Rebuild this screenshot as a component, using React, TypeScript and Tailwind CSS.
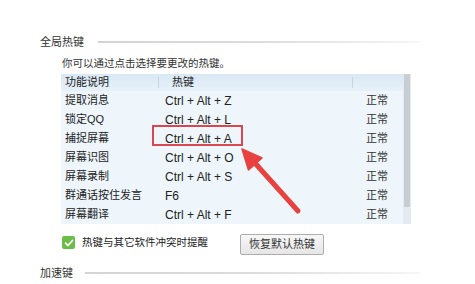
import React from 'react';

const rows = [
  { name: '提取消息', key: 'Ctrl + Alt + Z' },
  { name: '锁定QQ', key: 'Ctrl + Alt + L' },
  { name: '捕捉屏幕', key: 'Ctrl + Alt + A' },
  { name: '屏幕识图', key: 'Ctrl + Alt + O' },
  { name: '屏幕录制', key: 'Ctrl + Alt + S' },
  { name: '群通话按住发言', key: 'F6' },
  { name: '屏幕翻译', key: 'Ctrl + Alt + F' },
];

const font = { fontFamily: '"Liberation Sans", "Noto Sans CJK SC", sans-serif' };

export default function App() {
  return (
    <div className="relative w-[475px] h-[284px] bg-white overflow-hidden text-[#222]" style={font}>
      {/* 全局热键 */}
      <div className="flex items-center pt-[34px] pl-[40px] pr-[55px] h-[50px]">
        <span className="text-[11px] leading-[16px] text-[#333]">全局热键</span>
        <div className="flex-1 ml-[14px] h-[2px] bg-gradient-to-r from-[#d4d4d4] via-[#dcdcdc] to-[#f6f6f6]" />
      </div>

      <div className="pl-[62px] mt-[5px] text-[10.5px] leading-[16px] text-[#333]">你可以通过点击选择要更改的热键。</div>

      {/* 热键列表 */}
      <div className="relative ml-[61px] mt-[3px] w-[350px] h-[150px] flex bg-[#eef6fb]">
        <div className="w-[342px] flex flex-col">
          <div className="flex items-center h-[17px] bg-gradient-to-b from-[#d9e8f4] to-[#e7f1f9] text-[11px]">
            <span className="w-[97px] pl-[4px]">功能说明</span>
            <span className="w-px h-[11px] bg-[#c9d3dc]" />
            <span className="w-[193px] pl-[13px]">热键</span>
            <span className="w-px h-[11px] bg-[#c9d3dc]" />
          </div>
          {rows.map((r) => (
            <div key={r.name} className="flex items-center h-[19px]">
              <span className="w-[104px] pl-[4px] text-[11px]">{r.name}</span>
              <span className="w-[201px] text-[12px]">{r.key}</span>
              <span className="text-[11px] text-[#333]">正常</span>
            </div>
          ))}
        </div>
        {/* 滚动条 */}
        <div className="w-[8px] h-full bg-[#e4ebf0] flex flex-col items-center">
          <div className="w-[6px] h-[133px] bg-[#c6cdd3] rounded-[1px]" />
        </div>

        {/* 红框标注 */}
        <div className="absolute left-[91px] top-[51px] w-[91px] h-[21px] border-2 border-[#d8474f]" />
      </div>

      {/* 选项与按钮 */}
      <div className="flex items-center mt-[10px] h-[21px]">
        <div className="ml-[62px] w-[13px] h-[13px] bg-[#6cbd47] rounded-[2px] flex items-center justify-center -mt-[4px]">
          <svg width="10" height="10" viewBox="0 0 10 10">
            <path d="M1.6 5.2 L4 7.5 L8.5 2.5" fill="none" stroke="#fff" strokeWidth="1.8" strokeLinecap="round" strokeLinejoin="round" />
          </svg>
        </div>
        <span className="ml-[7px] text-[10.5px] -mt-[4px]">热键与其它软件冲突时提醒</span>
        <button className="ml-[32px] w-[84px] h-[21px] border border-[#adadad] rounded-[2px] bg-gradient-to-b from-[#f7f7f7] to-[#e6e6e6] text-[11px] text-[#333] flex items-center justify-center">
          恢复默认热键
        </button>
      </div>

      {/* 加速键 */}
      <div className="flex items-center mt-[10px] pl-[40px] pr-[55px] h-[16px]">
        <span className="text-[11px] leading-[16px] text-[#333]">加速键</span>
        <div className="flex-1 ml-[12px] h-[2px] bg-gradient-to-r from-[#d4d4d4] via-[#dcdcdc] to-[#f6f6f6]" />
      </div>

      {/* 红色箭头 */}
      <svg className="absolute left-0 top-0 pointer-events-none" width="475" height="284" viewBox="0 0 475 284">
        <line x1="298" y1="211" x2="254" y2="162" stroke="#e8413f" strokeWidth="5" strokeLinecap="round" />
        <polygon points="242,149 262,158 248.5,170" fill="#e8413f" stroke="#e8413f" strokeWidth="1.5" strokeLinejoin="round" />
      </svg>
    </div>
  );
}
